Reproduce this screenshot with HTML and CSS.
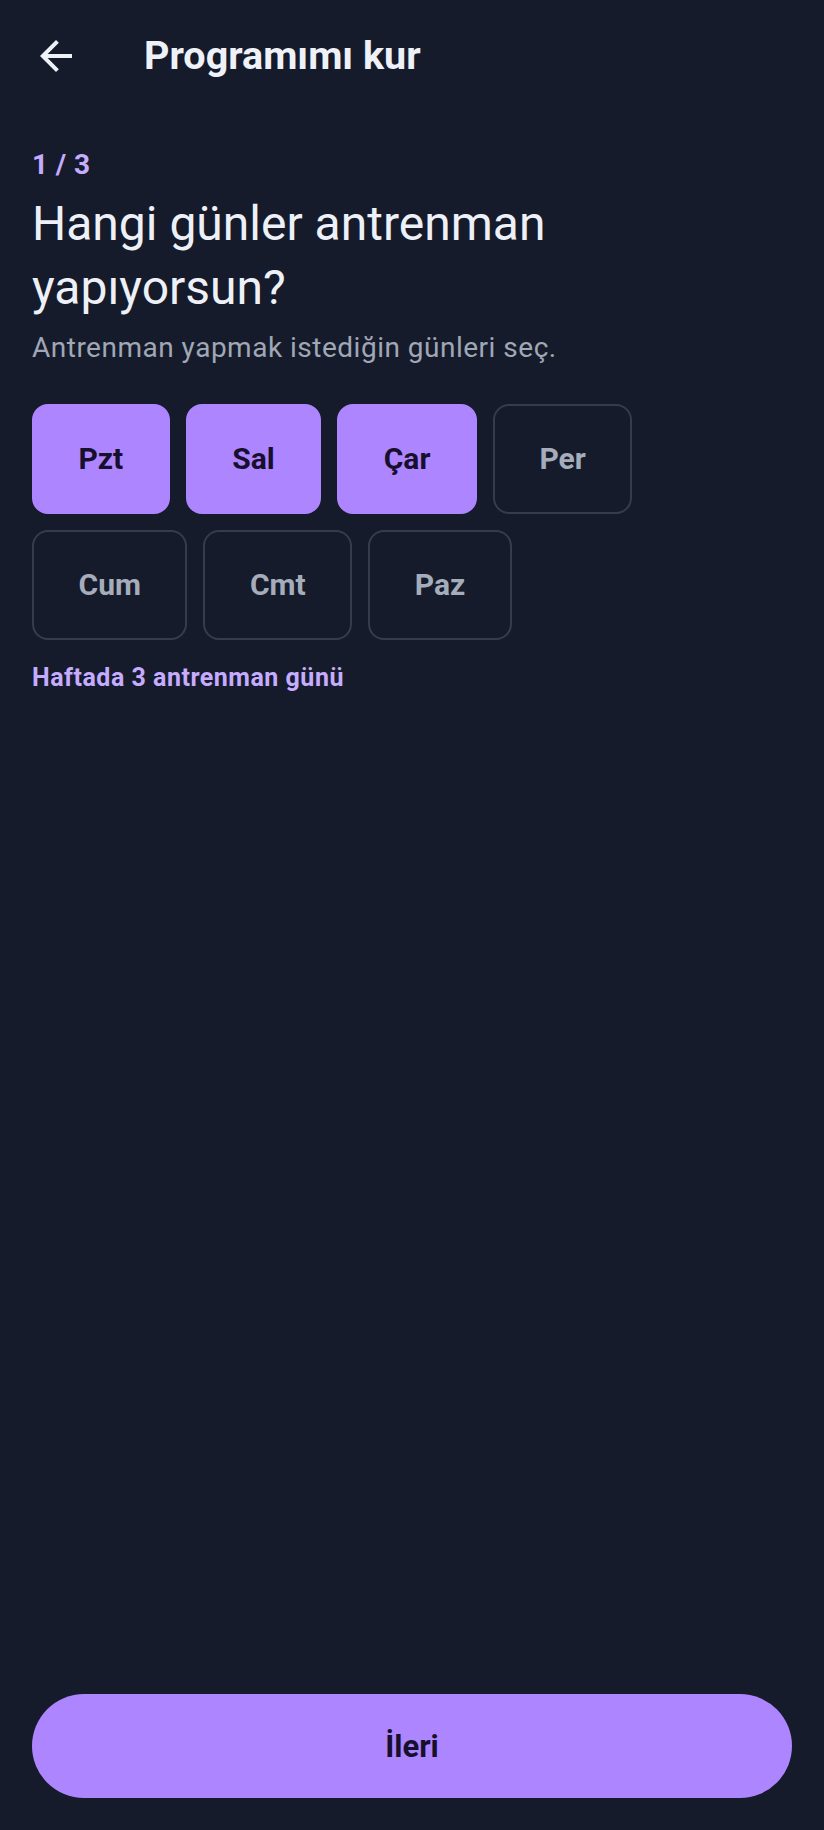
FILE: index.html
```html
<!DOCTYPE html>
<html lang="tr">
<head>
    <meta charset="UTF-8">
    <meta name="viewport" content="width=device-width, initial-scale=1.0">
    <title>Programımı kur</title>
    <link rel="stylesheet" href="styles.css">
</head>
<body>
    <div class="topbar">
        <a href="#" class="back" aria-label="Geri">
            <svg viewBox="0 0 24 24" width="48" height="48">
                <path d="M20 11H7.83l5.59-5.59L12 4l-8 8 8 8 1.41-1.41L7.83 13H20v-2z" fill="currentColor"/>
            </svg>
        </a>
        <h1>Programımı kur</h1>
    </div>

    <div class="content">
        <p class="step">1 / 3</p>
        <h2 class="question">Hangi günler antrenman yapıyorsun?</h2>
        <p class="hint">Antrenman yapmak istediğin günleri seç.</p>

        <!-- Gün seçimi -->
        <div class="days">
            <button class="day selected">Pzt</button>
            <button class="day selected">Sal</button>
            <button class="day selected">Çar</button>
            <button class="day">Per</button>
            <button class="day">Cum</button>
            <button class="day">Cmt</button>
            <button class="day">Paz</button>
        </div>

        <p class="count">Haftada 3 antrenman günü</p>
    </div>

    <div class="footer">
        <button class="next">İleri</button>
    </div>
</body>
</html>
```

FILE: styles.css
```css
body {
    font-family: Roboto, "Noto Sans", Arial, sans-serif;
    background-color: #151b2b;
    color: #eef1f8;
    margin: 0;
    padding: 0;
    display: flex;
    flex-direction: column;
    height: 100vh;
}
.topbar {
    height: 112px;
    display: flex;
    align-items: center;
}
.back {
    width: 48px;
    height: 48px;
    margin-left: 32px;
    color: #eef1f8;
    display: flex;
}
.topbar h1 {
    margin: 0 0 0 64px;
    font-size: 39.5px;
    line-height: 56px;
    font-weight: 700;
}
.content {
    padding: 0 32px;
}
.step {
    margin: 35px 0 0;
    font-size: 28px;
    line-height: 36px;
    font-weight: 700;
    letter-spacing: 0.4px;
    color: #c6acff;
}
.question {
    margin: 9px 0 0;
    font-size: 48px;
    line-height: 64px;
    font-weight: 400;
    color: #eef0f7;
}
.hint {
    margin: 8px 0 0;
    font-size: 28px;
    line-height: 40px;
    letter-spacing: 0.5px;
    color: #a0a7b5;
}
.days {
    margin-top: 36px;
    display: flex;
    flex-wrap: wrap;
    gap: 16px;
}
.day {
    font-family: inherit;
    font-size: 30px;
    line-height: 38px;
    font-weight: 700;
    padding: 34px 44.5px;
    border: 2px solid #363c4c;
    border-radius: 16px;
    background-color: transparent;
    color: #a5adbb;
}
.day.selected {
    background-color: #ad85ff;
    border-color: #ad85ff;
    color: #170f2e;
}
.count {
    margin: 22px 0 0;
    font-size: 25px;
    line-height: 32px;
    font-weight: 700;
    letter-spacing: 0.5px;
    color: #c6acff;
}
.footer {
    margin-top: auto;
    padding: 0 32px 32px;
}
.next {
    width: 100%;
    height: 104px;
    border: none;
    border-radius: 52px;
    background-color: #ad85ff;
    color: #170f2e;
    font-family: inherit;
    font-size: 31px;
    font-weight: 700;
}
```
